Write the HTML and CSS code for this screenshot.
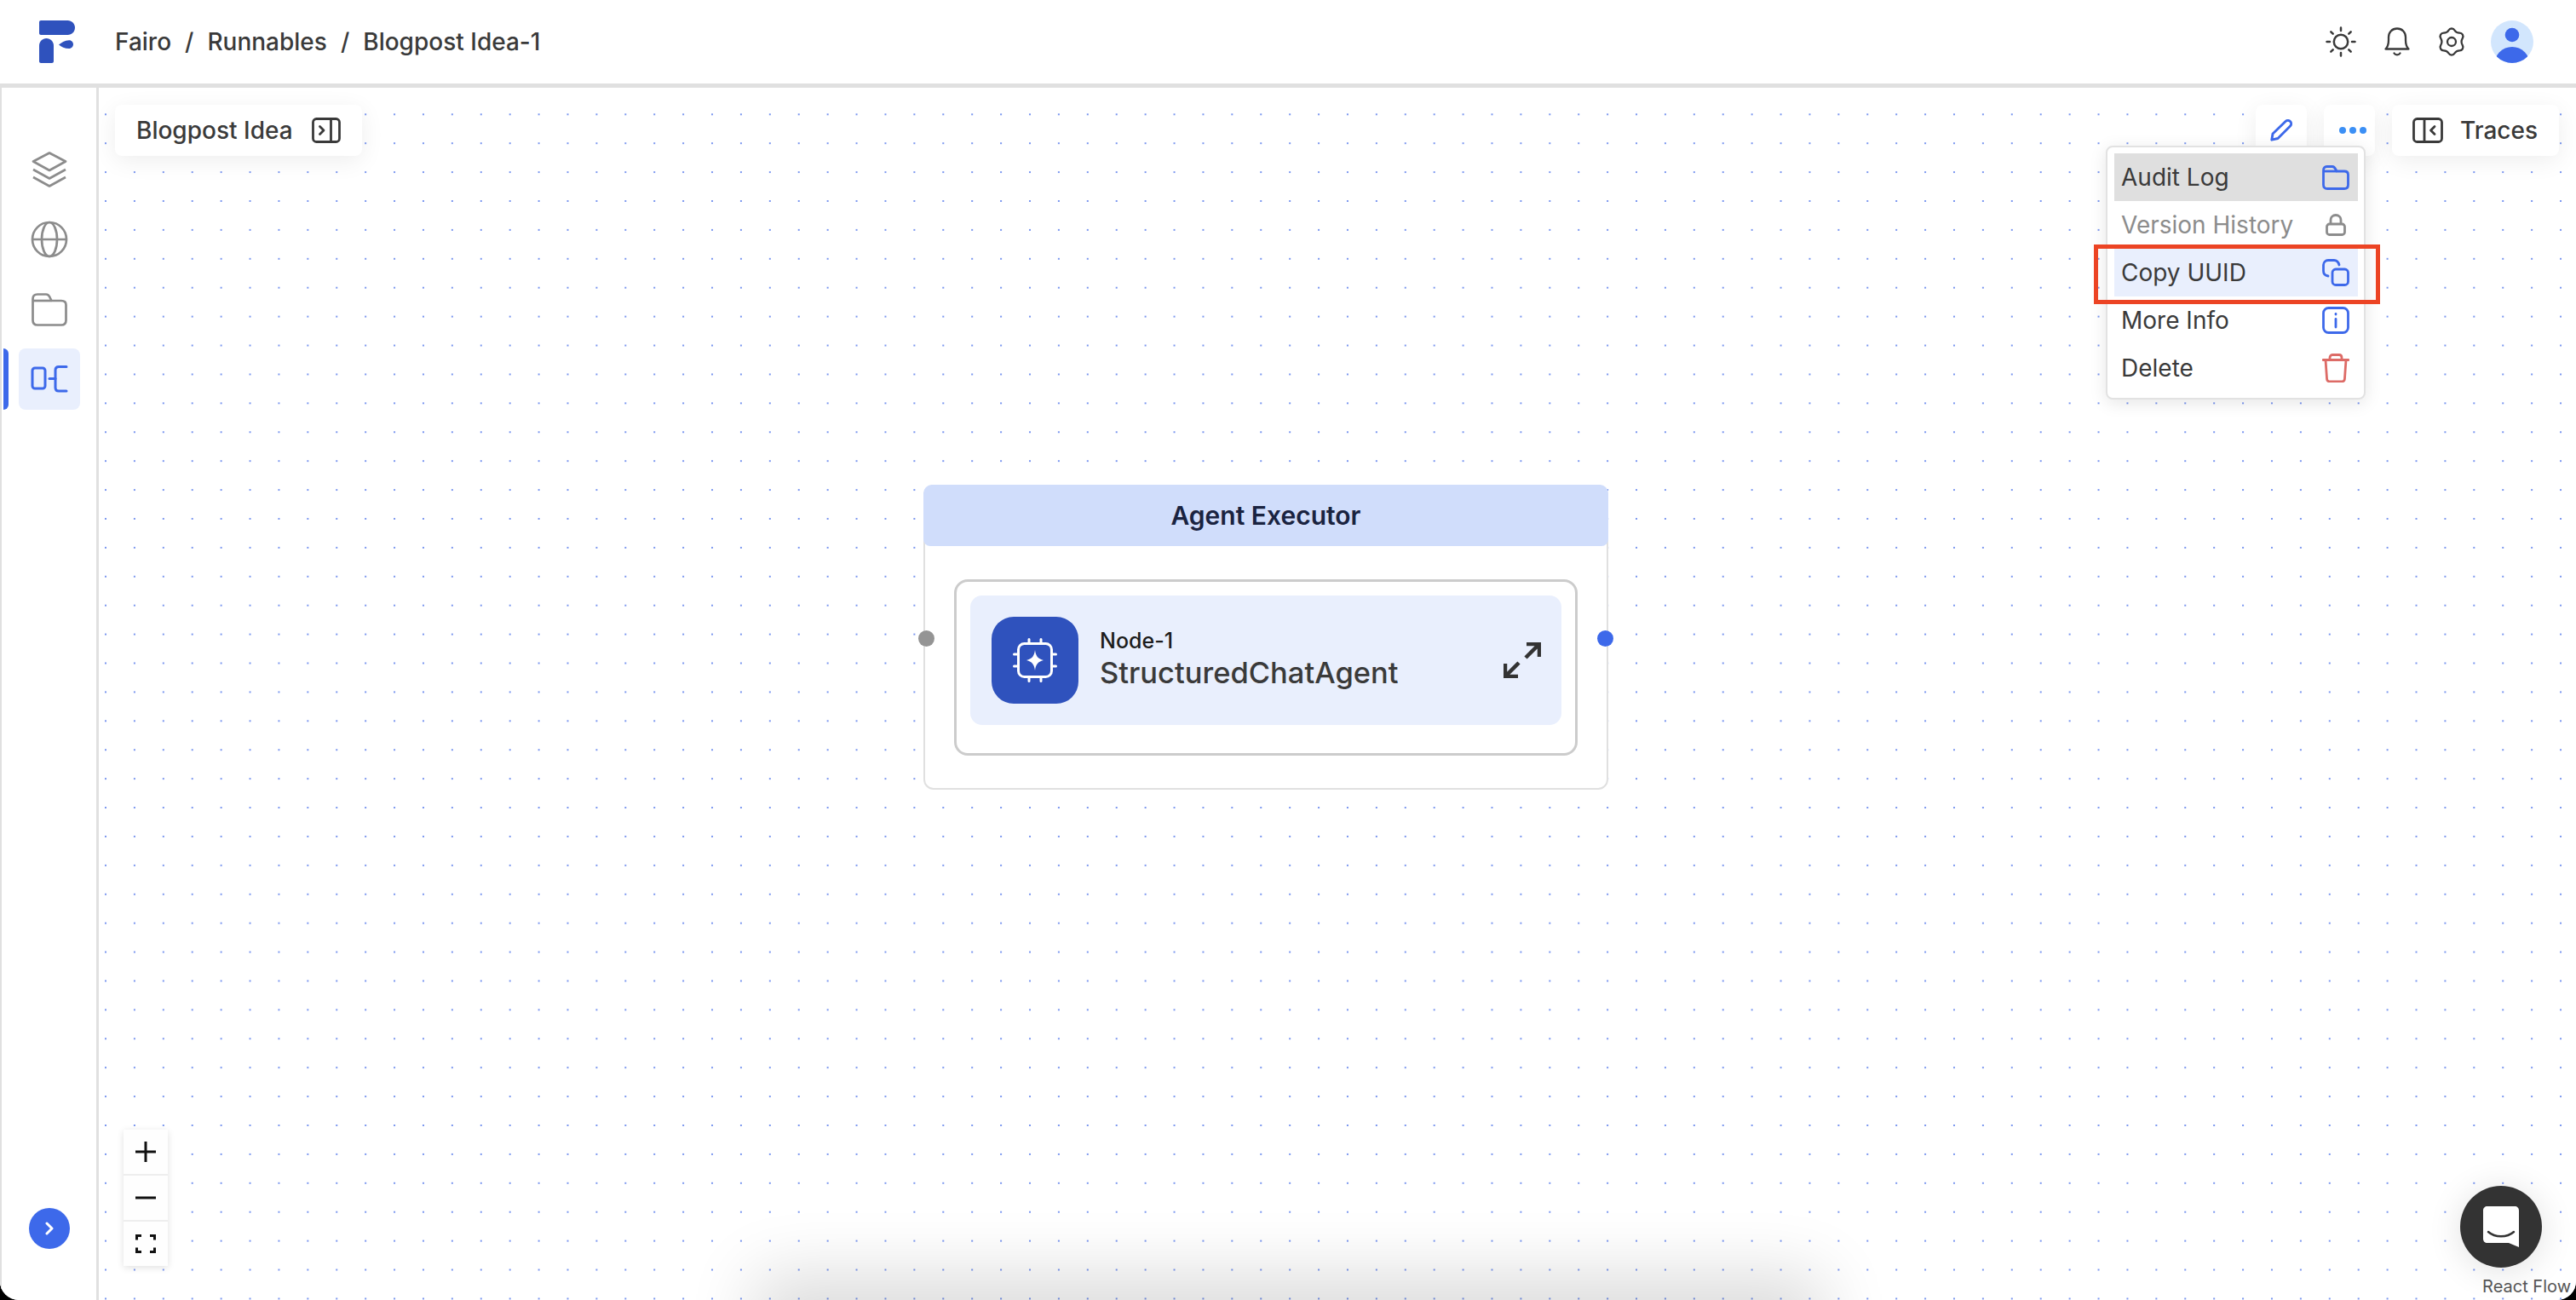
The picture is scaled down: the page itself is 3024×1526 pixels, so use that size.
FILE: index.html
```html
<!DOCTYPE html>
<html lang="en">
<head>
    <meta charset="UTF-8">
    <meta name="viewport" content="width=device-width, initial-scale=1.0">
    <title>Fairo - Blogpost Idea-1</title>
    <link rel="stylesheet" href="styles.css">
</head>
<body>
    <div class="app">
        <!-- Top bar -->
        <header class="topbar">
            <svg class="logo" width="42" height="50" viewBox="0 0 42 50" fill="#2f52bd">
                <path d="M2 0H33.500C38.200 0 42 3.800 42 8.500C42 13.200 38.200 17 33.500 17H2C.9 17 0 16.100 0 15V2C0 .9.900 0 2 0Z"/>
                <path d="M8.500 21C13.200 21 17 24.800 17 29.500V48C17 49.100 16.100 50 15 50H2C.9 50 0 49.100 0 48V29.500C0 24.800 3.800 21 8.500 21Z"/>
                <path d="M23 28.500C26 26 30 23.500 35 23.200C38 23 40 25.500 40 28C40 30.500 38 33 35 33C30 33 26 31 23 28.500Z"/>
            </svg>
            <nav class="crumbs">
                <span>Fairo</span><span class="sep">/</span><span>Runnables</span><span class="sep">/</span><span>Blogpost Idea-1</span>
            </nav>
            <div class="top-icons">
                <svg class="icon-sun" width="36" height="36" viewBox="0 0 36 36" fill="none" stroke="#3a3a3a" stroke-width="2.500" stroke-linecap="round">
                    <circle cx="18" cy="18" r="8.200"/>
                    <path d="M18 1.500V5M18 31V34.500M1.500 18H5M31 18H34.500M6.300 6.300L8.700 8.700M27.300 27.300L29.700 29.700M6.300 29.700L8.700 27.300M27.300 8.700L29.700 6.300"/>
                </svg>
                <svg class="icon-bell" width="30" height="34" viewBox="0 0 30 34" fill="none" stroke="#3a3a3a" stroke-width="2.300" stroke-linecap="round" stroke-linejoin="round">
                    <path d="M1.500 25.500H28.500C26 23 25 20 25 15V11.500C25 6 21 1.500 15 1.500C9 1.500 5 6 5 11.500V15C5 20 4 23 1.500 25.500Z"/>
                    <path d="M11.500 30.500C13 33 17 33 18.500 30.500"/>
                </svg>
                <svg class="icon-gear" width="32" height="34" viewBox="0 0 32 34" fill="none" stroke="#3a3a3a" stroke-width="2.300" stroke-linejoin="round">
                    <path d="M12.500 3.500C14 .8 18 .8 19.500 3.500C20.800 5.800 22.500 6.700 25.200 6.700C28.500 6.600 30.500 10 28.800 12.800C27.400 15.200 27.400 18.800 28.800 21.200C30.500 24 28.500 27.400 25.200 27.300C22.500 27.300 20.800 28.200 19.500 30.500C18 33.200 14 33.200 12.500 30.500C11.200 28.200 9.500 27.300 6.800 27.300C3.500 27.400 1.500 24 3.200 21.200C4.600 18.800 4.600 15.200 3.200 12.800C1.500 10 3.500 6.600 6.800 6.700C9.500 6.700 11.200 5.800 12.500 3.500Z"/>
                    <circle cx="16" cy="17" r="5"/>
                </svg>
                <svg class="avatar" width="50" height="50" viewBox="0 0 50 50">
                    <defs><clipPath id="avatarClip"><circle cx="25" cy="25" r="25"/></clipPath></defs>
                    <circle cx="25" cy="25" r="25" fill="#d2e6fd"/>
                    <g clip-path="url(#avatarClip)" fill="#3d69ea">
                        <circle cx="25" cy="17" r="8.300"/>
                        <ellipse cx="25" cy="52" rx="21" ry="21"/>
                    </g>
                </svg>
            </div>
        </header>

        <div class="main">
            <!-- Left rail -->
            <aside class="rail">
                <div class="rail-items">
                    <div class="rail-item">
                        <svg width="42" height="42" viewBox="0 0 42 42" fill="none" stroke="#8c8c8c" stroke-width="2.700" stroke-linejoin="round">
                            <path d="M21 1.500L40 11.500L21 22L2 11.500Z"/>
                            <path d="M2 21L21 31.500L40 21"/>
                            <path d="M2 30L21 40.500L40 30"/>
                        </svg>
                    </div>
                    <div class="rail-item">
                        <svg width="44" height="44" viewBox="0 0 44 44" fill="none" stroke="#8c8c8c" stroke-width="2.700">
                            <circle cx="22" cy="22" r="20"/>
                            <ellipse cx="22" cy="22" rx="9" ry="20"/>
                            <path d="M2 22H42"/>
                        </svg>
                    </div>
                    <div class="rail-item">
                        <svg width="42" height="39" viewBox="0 0 42 39" fill="none" stroke="#8c8c8c" stroke-width="2.700" stroke-linejoin="round">
                            <path d="M1.500 7C1.500 3.500 3.500 1.500 7 1.500H17C20 1.500 21 3.500 22 6L23.500 9H35C38.700 9 40.500 11 40.500 14V32C40.500 35.500 38.500 37.500 35 37.500H7C3.500 37.500 1.500 35.500 1.500 32Z"/>
                            <path d="M1.500 9H23.500"/>
                        </svg>
                    </div>
                    <div class="rail-item active">
                        <svg width="44" height="32" viewBox="0 0 44 32" fill="none" stroke="#3d69ea" stroke-width="3" stroke-linecap="round">
                            <rect x="2" y="3" width="15" height="24" rx="3"/>
                            <path d="M42 1.500H33C30.500 1.500 29 3 29 5.500V26C29 28.500 30.500 30 33 30H42"/>
                            <path d="M22 15.500H29"/>
                        </svg>
                    </div>
                </div>
                <div class="rail-toggle">
                    <svg width="12" height="16" viewBox="0 0 12 16" fill="none" stroke="#fff" stroke-width="3" stroke-linecap="round" stroke-linejoin="round">
                        <path d="M3 2L9 8L3 14"/>
                    </svg>
                </div>
            </aside>

            <!-- Flow canvas -->
            <main class="canvas">
                <div class="panel title-panel">
                    <span>Blogpost Idea</span>
                    <svg width="34" height="30" viewBox="0 0 34 30" fill="none" stroke="#3a3a3a" stroke-width="2.800" stroke-linejoin="round" stroke-linecap="round">
                        <rect x="1.500" y="1.500" width="31" height="27" rx="4"/>
                        <path d="M22.500 1.500V28.500"/>
                        <path d="M9.500 10.500L14 15L9.500 19.500"/>
                    </svg>
                </div>

                <div class="toolbar">
                    <div class="panel tool-btn">
                        <svg width="26" height="26" viewBox="0 0 26 26" fill="none" stroke="#3d69ea" stroke-width="2.900" stroke-linejoin="round">
                            <path d="M1.800 24.200L3 17L18 2.500C19.500 1 22 1 23.500 2.500C25 4 25 6.500 23.500 8L9 22.500Z"/>
                        </svg>
                    </div>
                    <div class="panel tool-btn">
                        <div class="more-dots"><i></i><i></i><i></i></div>
                    </div>
                    <div class="panel traces-btn">
                        <svg width="36" height="30" viewBox="0 0 36 30" fill="none" stroke="#3a3a3a" stroke-width="2.800" stroke-linejoin="round" stroke-linecap="round">
                            <rect x="1.500" y="1.500" width="33" height="27" rx="4"/>
                            <path d="M14 1.500V28.500"/>
                            <path d="M26 10.500L21.500 15L26 19.500"/>
                        </svg>
                        <span>Traces</span>
                    </div>
                </div>

                <div class="menu">
                    <div class="menu-row hovered">
                        <span>Audit Log</span>
                        <div class="menu-icon">
                            <svg width="32" height="29" viewBox="0 0 32 29" fill="none" stroke="#3d69ea" stroke-width="2.800" stroke-linejoin="round">
                                <path d="M1.500 6C1.500 3 3 1.500 5.500 1.500H12C14 1.500 15 3 16 5L17 7H26C29 7 30.500 8.500 30.500 11V23C30.500 26 29 27.500 26 27.500H6C3 27.500 1.500 26 1.500 23Z"/>
                                <path d="M1.500 7H17"/>
                            </svg>
                        </div>
                    </div>
                    <div class="menu-row disabled">
                        <span>Version History</span>
                        <div class="menu-icon">
                            <svg width="24" height="26" viewBox="0 0 24 26" fill="none" stroke="#8c8c8c" stroke-width="2.800" stroke-linejoin="round">
                                <rect x="1.500" y="12" width="21" height="12.500" rx="3"/>
                                <path d="M6 12V7.500C6 4 8.500 1.500 12 1.500C15.500 1.500 18 4 18 7.500V12"/>
                            </svg>
                        </div>
                    </div>
                    <div class="menu-row selected">
                        <span>Copy UUID</span>
                        <div class="menu-icon">
                            <svg width="32" height="32" viewBox="0 0 32 32" fill="none" stroke="#3d69ea" stroke-width="2.800" stroke-linejoin="round" stroke-linecap="round">
                                <rect x="12" y="12" width="18.500" height="18.500" rx="4"/>
                                <path d="M7 20C3.500 19.500 1.500 17 1.500 14V7C1.500 4 4 1.500 7 1.500H14C17 1.500 19 3.500 20 7"/>
                            </svg>
                        </div>
                    </div>
                    <div class="menu-row">
                        <span>More Info</span>
                        <div class="menu-icon">
                            <svg width="32" height="32" viewBox="0 0 32 32" fill="none" stroke="#3d69ea" stroke-width="2.800" stroke-linecap="round">
                                <rect x="1.500" y="1.500" width="29" height="29" rx="6"/>
                                <path d="M16 14.500V24"/>
                                <path d="M16 8.500V9"/>
                            </svg>
                        </div>
                    </div>
                    <div class="menu-row">
                        <span>Delete</span>
                        <div class="menu-icon">
                            <svg width="32" height="34" viewBox="0 0 32 34" fill="none" stroke="#dd6b66" stroke-width="2.800" stroke-linejoin="round" stroke-linecap="round">
                                <path d="M1 7.500H31"/>
                                <path d="M9 7.500V5C9 3 10 1.500 12 1.500H20C22 1.500 23 3 23 5V7.500"/>
                                <path d="M4 7.500L5.500 29C5.500 31.500 7 33 9.500 33H22.500C25 33 26.500 31.500 26.500 29L28 7.500"/>
                            </svg>
                        </div>
                    </div>
                </div>
                <div class="callout"></div>

                <!-- Agent group node -->
                <div class="group-node">
                    <div class="group-title">Agent Executor</div>
                    <div class="group-body">
                        <div class="node-frame">
                            <div class="node-card">
                                <div class="node-icon">
                                    <svg width="52" height="52" viewBox="0 0 52 52" fill="none" stroke="#fff" stroke-width="3" stroke-linecap="round">
                                        <rect x="6.500" y="6.500" width="39" height="39" rx="7"/>
                                        <path d="M19 1.500V6M33 1.500V6M19 46V50.500M33 46V50.500M1.500 19H6M1.500 33H6M46 19H50.500M46 33H50.500"/>
                                        <path d="M26 14C27 21 29 24 36 26C29 28 27 31 26 38C25 31 23 28 16 26C23 24 25 21 26 14Z" fill="#fff" stroke="none"/>
                                    </svg>
                                </div>
                                <div class="node-text">
                                    <div class="node-id">Node-1</div>
                                    <div class="node-name">StructuredChatAgent</div>
                                </div>
                                <svg class="node-expand" width="44" height="42" viewBox="0 0 44 42" fill="none" stroke="#333" stroke-width="4.500">
                                    <path d="M27 2H42V17M42 2L26 18"/>
                                    <path d="M2 25V40H17M2 40L18 24"/>
                                </svg>
                            </div>
                        </div>
                    </div>
                    <div class="handle handle-in"></div>
                    <div class="handle handle-out"></div>
                </div>

                <div class="zoom-controls">
                    <div class="zoom-btn">
                        <svg width="24" height="24" viewBox="0 0 24 24" stroke="#111" stroke-width="3"><path d="M12 0V24M0 12H24"/></svg>
                    </div>
                    <div class="zoom-btn">
                        <svg width="24" height="4" viewBox="0 0 24 4" stroke="#111" stroke-width="3"><path d="M0 2H24"/></svg>
                    </div>
                    <div class="zoom-btn">
                        <svg width="24" height="22" viewBox="0 0 24 22" fill="none" stroke="#111" stroke-width="3">
                            <path d="M7 1.500H1.500V6.500M17 1.500H22.500V6.500M7 20.500H1.500V15.500M17 20.500H22.500V15.500"/>
                        </svg>
                    </div>
                </div>

                <div class="bottom-glow"></div>

                <div class="chat-btn">
                    <svg width="42" height="48" viewBox="0 0 42 48">
                        <path d="M5 0H37C40 0 42 2 42 5V48L30 43H5C2 43 0 41 0 38V5C0 2 2 0 5 0Z" fill="#fff"/>
                        <path d="M6 30C14 37 28 37 36 30" fill="none" stroke="#333" stroke-width="2.500" stroke-linecap="round"/>
                    </svg>
                </div>
                <div class="attribution">React Flow</div>
            </main>
        </div>
    </div>
</body>
</html>
```
FILE: styles.css
```css
* {
    box-sizing: border-box;
}
html, body {
    margin: 0;
    height: 100%;
    overflow: hidden;
}
body {
    background: #000;
    font-family: "Inter", "Liberation Sans", sans-serif;
    color: #3a3a3a;
}
svg {
    display: block;
    flex-shrink: 0;
}
.app {
    width: 3024px;
    height: 1526px;
    background: #fff;
    border-radius: 0 0 22px 22px;
    overflow: hidden;
    display: flex;
    flex-direction: column;
}

/* top bar */
.topbar {
    height: 103px;
    flex-shrink: 0;
    display: flex;
    align-items: center;
    padding: 0 0 0 46px;
    border-bottom: 5px solid #e0e0e0;
    background: #fff;
}
.crumbs {
    margin-left: 47px;
    font-size: 28px;
    font-weight: 500;
    display: flex;
    gap: 16px;
}
.top-icons {
    margin-left: auto;
    margin-right: 50px;
    display: flex;
    align-items: center;
}
.icon-bell {
    margin-left: 33px;
}
.icon-gear {
    margin-left: 33px;
}
.avatar {
    margin-left: 30px;
}

/* left rail */
.main {
    flex: 1;
    display: flex;
    min-height: 0;
}
.rail {
    width: 116px;
    flex-shrink: 0;
    border-left: 2px solid #e0e0e0;
    border-right: 3px solid #e0e0e0;
    background: #fff;
    display: flex;
    flex-direction: column;
    align-items: center;
    justify-content: space-between;
    padding: 60px 0 60px;
}
.rail-items {
    display: flex;
    flex-direction: column;
    align-items: center;
    gap: 10px;
}
.rail-item {
    position: relative;
    width: 72px;
    height: 72px;
    border-radius: 8px;
    display: flex;
    align-items: center;
    justify-content: center;
}
.rail-item.active {
    background: #e9effd;
}
.rail-item.active::before {
    content: "";
    position: absolute;
    left: -18px;
    top: 0;
    width: 6px;
    height: 72px;
    background: #3d69ea;
    border-radius: 0 6px 6px 0;
}
.rail-toggle {
    width: 48px;
    height: 48px;
    border-radius: 50%;
    background: #3d69ea;
    display: flex;
    align-items: center;
    justify-content: center;
}

/* canvas */
.canvas {
    position: relative;
    flex: 1;
    overflow: hidden;
    background-color: #fff;
    background-image: radial-gradient(circle at center, #7b97ef 1.1px, transparent 1.4px);
    background-size: 33.92px 33.92px;
    background-position: -8.96px 14.34px;
}
.panel {
    background: #fff;
    border-radius: 8px;
    box-shadow: 0 6px 28px rgba(0, 0, 0, 0.07);
    font-size: 28px;
    font-weight: 500;
}
.title-panel {
    position: absolute;
    left: 19px;
    top: 20px;
    width: 290px;
    height: 60px;
    padding: 0 25px;
    display: flex;
    align-items: center;
    justify-content: space-between;
}
.toolbar {
    position: absolute;
    right: 20px;
    top: 20px;
    display: flex;
    gap: 20px;
}
.tool-btn {
    width: 60px;
    height: 60px;
    display: flex;
    align-items: center;
    justify-content: center;
}
.more-dots {
    margin-left: 8px;
    display: flex;
    gap: 4px;
}
.more-dots i {
    display: block;
    width: 8px;
    height: 8px;
    border-radius: 50%;
    background: #3b8ff5;
}
.traces-btn {
    width: 196px;
    height: 60px;
    padding-left: 24px;
    display: flex;
    align-items: center;
    gap: 20px;
}

/* dropdown */
.menu {
    position: absolute;
    right: 247px;
    top: 68px;
    width: 305px;
    height: 298px;
    padding: 7px 7px 7px 8px;
    background: #fff;
    border: 2px solid #e2e2e2;
    border-radius: 8px;
    box-shadow: 0 4px 20px rgba(0, 0, 0, 0.1);
}
.menu-row {
    height: 56px;
    padding: 0 10px 0 8px;
    display: flex;
    align-items: center;
    justify-content: space-between;
    font-size: 28px;
}
.menu-row.hovered {
    background: #dfdfdf;
}
.menu-row.selected {
    background: #e9effd;
}
.menu-row.disabled {
    color: #8c8c8c;
}
.menu-icon {
    width: 32px;
    display: flex;
    justify-content: center;
}
.callout {
    position: absolute;
    left: 2342px;
    top: 184px;
    width: 336px;
    height: 70px;
    border: 5px solid #ec4424;
}

/* group node */
.group-node {
    position: absolute;
    left: 968px;
    top: 466px;
    width: 804px;
    height: 358px;
    background: #fff;
    border: 2px solid #e0e0e0;
    border-radius: 12px;
}
.group-title {
    height: 72px;
    margin: -2px -2px 0;
    background: #d0ddfb;
    border-radius: 10px 10px 8px 8px;
    color: #1a2340;
    font-size: 30px;
    font-weight: 600;
    display: flex;
    align-items: center;
    justify-content: center;
}
.group-body {
    padding: 39px 34px 0;
}
.node-frame {
    height: 207px;
    padding: 16px;
    border: 3px solid #cccccc;
    border-radius: 16px;
}
.node-card {
    height: 152px;
    padding: 0 24px 0 25px;
    background: #e9effd;
    border-radius: 14px;
    display: flex;
    align-items: center;
}
.node-icon {
    width: 102px;
    height: 102px;
    border-radius: 26px;
    background: #2f52bd;
    display: flex;
    align-items: center;
    justify-content: center;
}
.node-text {
    margin-left: 25px;
    padding-bottom: 3px;
    flex: 1;
}
.node-id {
    font-size: 25px;
    font-weight: 500;
    color: #1c1c1c;
    line-height: 30px;
}
.node-name {
    margin-top: 2px;
    font-size: 34.500px;
    font-weight: 500;
    line-height: 42px;
}
.handle {
    position: absolute;
    top: 169px;
    width: 19px;
    height: 19px;
    border-radius: 50%;
}
.handle-in {
    left: -8.500px;
    background: #949494;
}
.handle-out {
    right: -7.500px;
    background: #3d69ea;
}

/* flow controls */
.zoom-controls {
    position: absolute;
    left: 29px;
    bottom: 40px;
    width: 52px;
    box-shadow: 0 2px 8px rgba(0, 0, 0, 0.12);
}
.zoom-btn {
    height: 54px;
    background: #fefefe;
    border-bottom: 2px solid #eeeeee;
    display: flex;
    align-items: center;
    justify-content: center;
}
.zoom-btn:last-child {
    height: 52px;
    border-bottom: none;
}
.bottom-glow {
    position: absolute;
    left: 800px;
    bottom: -60px;
    width: 1194px;
    height: 60px;
    background: #e0e0e0;
    box-shadow: 0 0 80px 30px rgba(0, 0, 0, 0.14);
}
.chat-btn {
    position: absolute;
    right: 40px;
    bottom: 38px;
    width: 96px;
    height: 96px;
    border-radius: 50%;
    background: #333;
    box-shadow: 0 4px 40px rgba(0, 0, 0, 0.12);
    display: flex;
    align-items: center;
    justify-content: center;
}
.attribution {
    position: absolute;
    right: 6px;
    bottom: 4px;
    font-size: 20px;
    color: #555;
}
```
